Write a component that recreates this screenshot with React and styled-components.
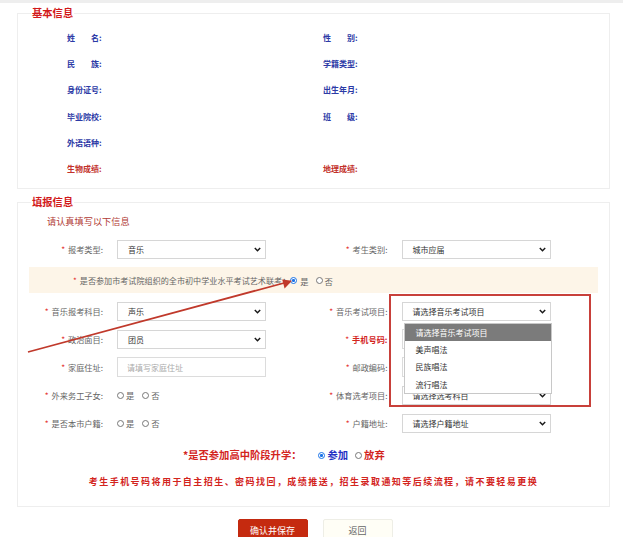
import React from "react";
import styled, { createGlobalStyle } from "styled-components";

const Global = createGlobalStyle`
  html, body { margin: 0; padding: 0; background: #fff; }
  body { font-family: "Noto Sans CJK SC", "Noto Sans", sans-serif; }
  * { box-sizing: border-box; }
`;

const Page = styled.div`
  position: relative;
  width: 623px;
  height: 537px;
  overflow: hidden;
`;

const TopBar = styled.div`
  height: 3px;
  background: #eeeeee;
`;

const Panel = styled.fieldset`
  margin: ${(p) => p.$top}px 13px 0 17px;
  padding: 0;
  border: 1px solid #eeeeee;
  min-width: 0;
`;

const Legend = styled.legend`
  margin-left: 13px;
  padding: 0 1px;
  font-size: 10.3px;
  line-height: 12px;
  font-weight: 700;
  color: #d2191a;
`;

const BasicGrid = styled.div`
  display: grid;
  grid-template-columns: 256px 1fr;
  grid-auto-rows: 26.2px;
  align-items: center;
  padding: 6px 0 6px 49px;
`;

const BasicLabel = styled.span`
  font-size: 8px;
  line-height: 12px;
  font-weight: 700;
  white-space: pre;
  color: ${(p) => (p.$red ? "#c2302a" : "#2c3aa6")};
`;

const Subtitle = styled.div`
  margin: 5px 0 0 29px;
  font-size: 9.2px;
  line-height: 16px;
  color: #b13a34;
`;

const FormArea = styled.div`
  padding: 6px 11px 16px;
`;

const Row = styled.div`
  display: flex;
  height: 28px;
`;

const Field = styled.div`
  position: relative;
  display: flex;
  align-items: center;
  width: 285px;
`;

const FieldLabel = styled.label`
  width: 74px;
  margin-right: 14px;
  text-align: right;
  white-space: nowrap;
  font-size: 8.2px;
  line-height: 12px;
  font-weight: ${(p) => (p.$strong ? 700 : 400)};
  color: ${(p) => (p.$strong ? "#d3241d" : "#666")};
`;

const Star = styled.span`
  color: #e53935;
  margin-right: 3px;
  font-weight: 400;
`;

const SelectBox = styled.div`
  position: relative;
  width: 149px;
  height: 19px;
  border: 1px solid #d6d6d6;
  background: #fff;
  display: flex;
  align-items: center;
  justify-content: space-between;
  padding: 0 4px 0 10px;
  font-size: 8px;
  color: #333;
`;

const TextInput = styled.input`
  width: 149px;
  height: 20px;
  border: 1px solid #dcdcdc;
  padding: 0 9px;
  font-family: inherit;
  font-size: 8px;
  color: #333;
  outline: none;
  &::placeholder { color: #aaa; }
`;

const Band = styled.div`
  display: flex;
  align-items: center;
  height: 26px;
  margin: 4px 0;
  padding: 1px 0 0 44px;
  background: #fdf5e8;
  font-size: 8.1px;
  color: #666;
`;

const RadioGroup = styled.div`
  display: flex;
  align-items: center;
  gap: ${(p) => p.$gap || 8}px;
`;

const RadioItem = styled.span`
  display: inline-flex;
  align-items: center;
  gap: ${(p) => p.$gap || 2}px;
  font-size: ${(p) => p.$size || 8.3}px;
  line-height: 12px;
  font-weight: ${(p) => (p.$bold ? 700 : 400)};
  color: ${(p) => p.$color || "#666"};
`;

const RadioDot = styled.span`
  width: ${(p) => p.$d || 7}px;
  height: ${(p) => p.$d || 7}px;
  border-radius: 50%;
  border: 1px solid ${(p) => (p.$checked ? "#1a73e8" : "#777")};
  background: ${(p) =>
    p.$checked ? "radial-gradient(circle, #1a73e8 0 38%, #fff 45% 100%)" : "#fff"};
  flex: none;
`;

const Upgrade = styled.div`
  display: flex;
  align-items: center;
  gap: 16px;
  height: 16px;
  margin-top: 10px;
  padding-left: 154px;
`;

const UpgradeLabel = styled.span`
  font-size: 10.3px;
  line-height: 14px;
  font-weight: 700;
  color: #d3241d;
`;

const Notice = styled.div`
  margin-top: 11px;
  text-align: center;
  font-size: 9px;
  line-height: 16px;
  letter-spacing: 1.45px;
  font-weight: 700;
  color: #d3241d;
`;

const Buttons = styled.div`
  display: flex;
  justify-content: center;
  gap: 15px;
  margin-top: 12px;
  padding-left: 7px;
`;

const Button = styled.button`
  width: 70px;
  height: 23px;
  padding: 0;
  font-family: inherit;
  font-size: 9px;
  line-height: 12px;
  border-radius: 2px;
  border: 1px solid ${(p) => (p.$primary ? "#c2290f" : "#eeeee6")};
  background: ${(p) => (p.$primary ? "#c52a0f" : "#fffef6")};
  color: ${(p) => (p.$primary ? "#fff" : "#666")};
`;

const Dropdown = styled.ul`
  position: absolute;
  left: 1px;
  top: calc(100% + 3px);
  width: 148px;
  margin: 0;
  padding: 0;
  list-style: none;
  background: #fff;
  border: 1px solid #c8c8c8;
  z-index: 5;
`;

const Option = styled.li`
  height: 17.3px;
  display: flex;
  align-items: center;
  padding-left: 11px;
  font-size: 8px;
  color: ${(p) => (p.$active ? "#fff" : "#333")};
  background: ${(p) => (p.$active ? "#7b7b7b" : "#fff")};
`;

const Highlight = styled.div`
  position: absolute;
  left: 389px;
  top: 294px;
  width: 202px;
  height: 113px;
  border: 2px solid #c8403a;
  z-index: 8;
  pointer-events: none;
`;

const ArrowLayer = styled.svg`
  position: absolute;
  left: 0;
  top: 0;
  z-index: 9;
  pointer-events: none;
`;

const Chevron = () => (
  <svg width="7" height="5" viewBox="0 0 7 5">
    <path d="M0.8 1 L3.5 3.7 L6.2 1" fill="none" stroke="#1a1a1a" strokeWidth="1.5" />
  </svg>
);

const Select = ({ value, children }) => (
  <SelectBox>
    <span>{value}</span>
    <Chevron />
    {children}
  </SelectBox>
);

const Label = ({ children, strong }) => (
  <FieldLabel $strong={strong}>
    <Star>*</Star>
    {children}
  </FieldLabel>
);

const YesNo = () => (
  <RadioGroup $gap={8}>
    <RadioItem>
      <RadioDot />是
    </RadioItem>
    <RadioItem>
      <RadioDot />否
    </RadioItem>
  </RadioGroup>
);

const basic = [
  ["姓\u3000\u3000名:", "性\u3000\u3000别:"],
  ["民\u3000\u3000族:", "学籍类型:"],
  ["身份证号:", "出生年月:"],
  ["毕业院校:", "班\u3000\u3000级:"],
  ["外语语种:", ""],
];

export default function App() {
  return (
    <Page>
      <Global />
      <TopBar />
      <Panel $top={4}>
        <Legend>基本信息</Legend>
        <BasicGrid>
          {basic.map(([a, b]) => (
            <React.Fragment key={a}>
              <BasicLabel>{a}</BasicLabel>
              <BasicLabel>{b}</BasicLabel>
            </React.Fragment>
          ))}
          <BasicLabel $red>生物成绩:</BasicLabel>
          <BasicLabel $red>地理成绩:</BasicLabel>
        </BasicGrid>
      </Panel>

      <Panel $top={7}>
        <Legend>填报信息</Legend>
        <Subtitle>请认真填写以下信息</Subtitle>
        <FormArea>
          <Row>
            <Field>
              <Label>报考类型:</Label>
              <Select value="音乐" />
            </Field>
            <Field>
              <Label>考生类别:</Label>
              <Select value="城市应届" />
            </Field>
          </Row>
          <Band>
            <Star>*</Star>是否参加市考试院组织的全市初中学业水平考试艺术联考：
            <RadioGroup $gap={7}>
              <RadioItem $gap={3}>
                <RadioDot $d={7} $checked />是
              </RadioItem>
              <RadioItem $gap={2}>
                <RadioDot $d={7} />否
              </RadioItem>
            </RadioGroup>
          </Band>
          <Row>
            <Field>
              <Label>音乐报考科目:</Label>
              <Select value="声乐" />
            </Field>
            <Field>
              <Label>音乐考试项目:</Label>
              <Select value="请选择音乐考试项目">
                <Dropdown>
                  <Option $active>请选择音乐考试项目</Option>
                  <Option>美声唱法</Option>
                  <Option>民族唱法</Option>
                  <Option>流行唱法</Option>
                </Dropdown>
              </Select>
            </Field>
          </Row>
          <Row>
            <Field>
              <Label>政治面目:</Label>
              <Select value="团员" />
            </Field>
            <Field>
              <Label strong>手机号码:</Label>
              <TextInput />
            </Field>
          </Row>
          <Row>
            <Field>
              <Label>家庭住址:</Label>
              <TextInput placeholder="请填写家庭住址" />
            </Field>
            <Field>
              <Label>邮政编码:</Label>
              <TextInput />
            </Field>
          </Row>
          <Row>
            <Field>
              <Label>外来务工子女:</Label>
              <YesNo />
            </Field>
            <Field>
              <Label>体育选考项目:</Label>
              <Select value="请选择选考科目" />
            </Field>
          </Row>
          <Row>
            <Field>
              <Label>是否本市户籍:</Label>
              <YesNo />
            </Field>
            <Field>
              <Label>户籍地址:</Label>
              <Select value="请选择户籍地址" />
            </Field>
          </Row>
          <Upgrade>
            <UpgradeLabel>*是否参加高中阶段升学：</UpgradeLabel>
            <RadioGroup $gap={7}>
              <RadioItem $size={10.3} $bold $color="#2430c4" $gap={3}>
                <RadioDot $checked />参加
              </RadioItem>
              <RadioItem $size={10.3} $bold $color="#d3241d" $gap={2}>
                <RadioDot />放弃
              </RadioItem>
            </RadioGroup>
          </Upgrade>
          <Notice>
            考生手机号码将用于自主招生、密码找回，成绩推送，招生录取通知等后续流程，请不要轻易更换
          </Notice>
        </FormArea>
      </Panel>

      <Buttons>
        <Button $primary>确认并保存</Button>
        <Button>返回</Button>
      </Buttons>

      <Highlight />
      <ArrowLayer width="623" height="537" viewBox="0 0 623 537">
        <line x1="28" y1="352" x2="284" y2="283" stroke="#c0392b" strokeWidth="1.8" />
        <path d="M292 280.8 L282.2 279.6 L284.6 288.4 Z" fill="#c0392b" />
      </ArrowLayer>
    </Page>
  );
}
